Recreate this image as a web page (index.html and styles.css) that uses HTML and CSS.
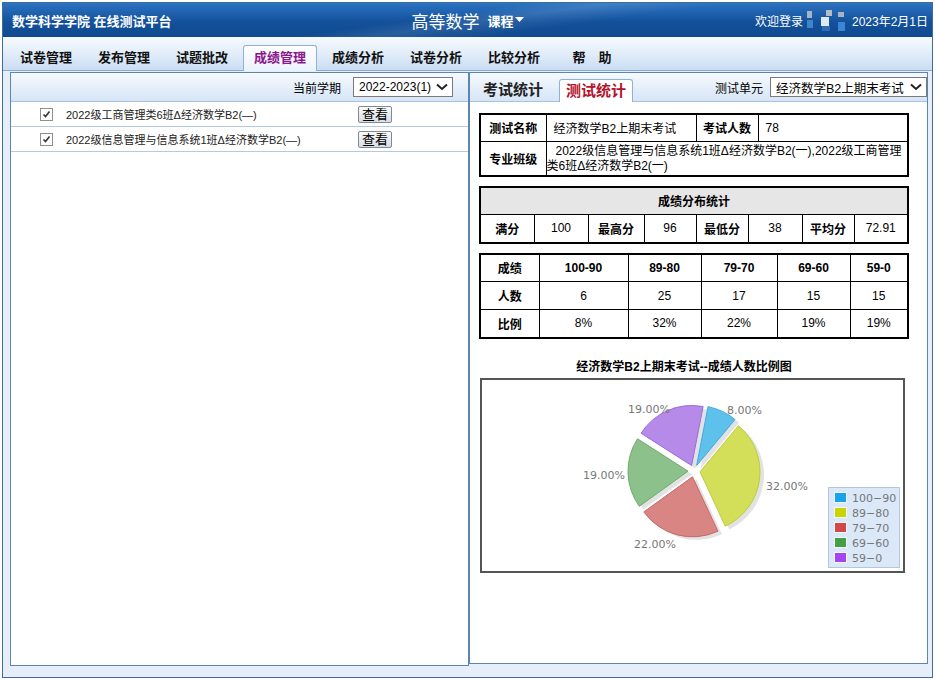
FILE: index.html
```html
<!DOCTYPE html>
<html lang="zh-CN">
<head>
  <meta charset="UTF-8">
  <title>数学科学学院 在线测试平台 - 成绩管理</title>
  <link rel="stylesheet" href="styles.css">
</head>
<body>
  <div class="app">
    <div class="topbar">
      <div class="brand">数学科学学院 在线测试平台</div>
      <div class="course">
        <span class="course-name">高等数学</span>
        <span class="course-menu">课程<svg width="9" height="6" viewBox="0 0 9 6"><polygon points="0,0 9,0 4.5,5" fill="#fff"/></svg></span>
      </div>
      <div class="user">
        <span>欢迎登录</span>
        <svg class="blur" width="40" height="24" viewBox="0 0 40 24">
          <rect x="1" y="3" width="5" height="7" fill="#a9b4c2"/>
          <rect x="1" y="12" width="6" height="8" fill="#3f83c9"/>
          <rect x="15" y="9" width="8" height="9" fill="#dfe9f6"/>
          <rect x="20" y="2" width="6" height="6" fill="#b4bcc6"/>
          <rect x="16" y="18" width="8" height="5" fill="#2c6cb6"/>
          <rect x="32" y="4" width="6" height="5" fill="#a8b3bf"/>
          <rect x="32" y="14" width="7" height="9" fill="#3a86d2"/>
        </svg>
        <span class="date">2023年2月1日</span>
      </div>
    </div>

    <div class="nav">
      <div class="tab">试卷管理</div>
      <div class="tab">发布管理</div>
      <div class="tab">试题批改</div>
      <div class="tab active">成绩管理</div>
      <div class="tab">成绩分析</div>
      <div class="tab">试卷分析</div>
      <div class="tab">比较分析</div>
      <div class="tab">帮　助</div>
    </div>

    <div class="main">
      <div class="panel left">
        <div class="phead">
          <span>当前学期</span>
          <div class="select term">
            <span>2022-2023(1)</span>
            <svg width="12" height="8" viewBox="0 0 12 8"><path d="M1 1.5 L6 6 L11 1.5" fill="none" stroke="#222" stroke-width="2"/></svg>
          </div>
        </div>
        <div class="row">
          <span class="chk"><svg width="11" height="11" viewBox="0 0 11 11"><path d="M2.5 5.5 L4.5 7.5 L8.5 2.5" fill="none" stroke="#333" stroke-width="1.6"/></svg></span>
          <span class="name">2022级工商管理类6班Δ经济数学B2(—)</span>
          <button class="btn">查看</button>
        </div>
        <div class="row">
          <span class="chk"><svg width="11" height="11" viewBox="0 0 11 11"><path d="M2.5 5.5 L4.5 7.5 L8.5 2.5" fill="none" stroke="#333" stroke-width="1.6"/></svg></span>
          <span class="name">2022级信息管理与信息系统1班Δ经济数学B2(—)</span>
          <button class="btn">查看</button>
        </div>
      </div>

      <div class="panel right">
        <div class="rhead">
          <div class="stab">考试统计</div>
          <div class="stab active">测试统计</div>
          <div class="unit">
            <span>测试单元</span>
            <div class="select exam">
              <span>经济数学B2上期末考试</span>
              <svg width="12" height="8" viewBox="0 0 12 8"><path d="M1 1.5 L6 6 L11 1.5" fill="none" stroke="#222" stroke-width="2"/></svg>
            </div>
          </div>
        </div>

        <div class="rbody">
          <table class="grid info">
            <tr class="r1">
              <th style="width:66px">测试名称</th>
              <td class="txt" style="width:150px">经济数学B2上期末考试</td>
              <th style="width:62px">考试人数</th>
              <td class="txt">78</td>
            </tr>
            <tr class="r2">
              <th>专业班级</th>
              <td class="classes" colspan="3">2022级信息管理与信息系统1班Δ经济数学B2(一),2022级工商管理类6班Δ经济数学B2(一)</td>
            </tr>
          </table>

          <table class="grid stats">
            <tr><th class="cap" colspan="8">成绩分布统计</th></tr>
            <tr>
              <th style="width:54px">满分</th><td style="width:54px">100</td>
              <th style="width:56px">最高分</th><td style="width:52px">96</td>
              <th style="width:52px">最低分</th><td style="width:54px">38</td>
              <th style="width:52px">平均分</th><td>72.91</td>
            </tr>
          </table>

          <table class="grid dist">
            <tr>
              <th style="width:59px">成绩</th>
              <th style="width:89px">100-90</th>
              <th style="width:73px">89-80</th>
              <th style="width:76px">79-70</th>
              <th style="width:73px">69-60</th>
              <th>59-0</th>
            </tr>
            <tr><th>人数</th><td>6</td><td>25</td><td>17</td><td>15</td><td>15</td></tr>
            <tr><th>比例</th><td>8%</td><td>32%</td><td>22%</td><td>19%</td><td>19%</td></tr>
          </table>

          <div class="chart-title">经济数学B2上期末考试--成绩人数比例图</div>
          <div class="chart">
            <svg width="421" height="191" viewBox="0 0 421 191">
              <!-- shadows -->
              <g fill="#e2e2e2" transform="translate(4,3)">
                <path d="M214.6 85.6 L226.0 26.7 A60 60 0 0 1 253.0 39.5 Z"/>
                <path d="M218.0 91.8 L256.4 45.7 A60 60 0 0 1 243.3 146.2 Z"/>
                <path d="M210.5 96.8 L235.9 151.2 A60 60 0 0 1 161.8 131.9 Z"/>
                <path d="M206.0 91.2 L157.3 126.3 A60 60 0 0 1 155.5 58.8 Z"/>
                <path d="M209.6 85.5 L159.1 53.2 A60 60 0 0 1 221.1 26.6 Z"/>
              </g>
              <path d="M214.6 85.6 L226.0 26.7 A60 60 0 0 1 253.0 39.5 Z" fill="#5dc1ec" stroke="#3ea9df"/>
              <path d="M218.0 91.8 L256.4 45.7 A60 60 0 0 1 243.3 146.2 Z" fill="#d3df58" stroke="#bfca3c"/>
              <path d="M210.5 96.8 L235.9 151.2 A60 60 0 0 1 161.8 131.9 Z" fill="#d88584" stroke="#c46968"/>
              <path d="M206.0 91.2 L157.3 126.3 A60 60 0 0 1 155.5 58.8 Z" fill="#8cc18b" stroke="#6eab6c"/>
              <path d="M209.6 85.5 L159.1 53.2 A60 60 0 0 1 221.1 26.6 Z" fill="#b68ae9" stroke="#9b6cd8"/>

              <g class="pct">
                <text x="245" y="34">8.00%</text>
                <text x="284" y="110">32.00%</text>
                <text x="152" y="168">22.00%</text>
                <text x="101" y="99">19.00%</text>
                <text x="146" y="33">19.00%</text>
              </g>

              <rect x="346.5" y="107.5" width="71" height="80" fill="#dae8f8" stroke="#b3c7dc"/>
              <g stroke="#f4f8fc">
                <rect x="352.5" y="112.5" width="12" height="10" fill="#19a3ea"/>
                <rect x="352.5" y="127.5" width="12" height="10" fill="#c9d500"/>
                <rect x="352.5" y="142.5" width="12" height="10" fill="#d24848"/>
                <rect x="352.5" y="157.5" width="12" height="10" fill="#45a045"/>
                <rect x="352.5" y="172.5" width="12" height="10" fill="#a545f0"/>
              </g>
              <g class="legend">
                <text x="370" y="122">100−90</text>
                <text x="370" y="137">89−80</text>
                <text x="370" y="152">79−70</text>
                <text x="370" y="167">69−60</text>
                <text x="370" y="182">59−0</text>
              </g>
            </svg>
          </div>
        </div>
      </div>
    </div>
  </div>
</body>
</html>
```

FILE: styles.css
```css
* {
  box-sizing: border-box;
}
body {
  margin: 0;
  background: #fff;
  font-family: "Liberation Sans", "Noto Sans CJK SC", sans-serif;
  font-size: 12px;
  color: #000;
}
.app {
  margin: 2px 2px 0;
  height: 676px;
  border: 1px solid #3d6c9e;
  background: #e6eff9;
  display: flex;
  flex-direction: column;
}

/* top bar */
.topbar {
  height: 34px;
  display: grid;
  grid-template-columns: 1fr auto 1fr;
  align-items: center;
  color: #fff;
  background:
    linear-gradient(172deg, rgba(255,255,255,0) 45%, rgba(255,255,255,0.10) 52%, rgba(255,255,255,0) 62%),
    linear-gradient(#2c73c2, #14519b 55%, #0f4a8f);
}
.brand {
  padding-left: 9px;
  font-weight: bold;
  font-size: 13px;
}
.course {
  display: flex;
  align-items: center;
  gap: 8px;
}
.course-name {
  font-size: 17px;
}
.course-menu {
  font-size: 13px;
  font-weight: bold;
  display: flex;
  align-items: center;
  gap: 1px;
}
.user {
  justify-self: end;
  padding-right: 4px;
  display: flex;
  align-items: center;
  font-size: 12px;
}
.blur {
  margin: 0 6px 0 3px;
}

/* nav tabs */
.nav {
  height: 34px;
  display: flex;
  align-items: flex-end;
  padding-left: 4px;
  background: linear-gradient(#f7fafe, #e2edf9 50%, #c9ddf3);
  border-bottom: 1px solid #88acd2;
}
.tab {
  width: 74px;
  margin: 0 2px;
  height: 25px;
  line-height: 25px;
  text-align: center;
  font-weight: bold;
  font-size: 13px;
  color: #111;
}
.tab.active {
  height: 26px;
  margin-bottom: -1px;
  line-height: 24px;
  color: #8c168c;
  background: linear-gradient(#ffffff, #eaf2fb);
  border: 1px solid #8fb1d3;
  border-bottom: none;
  border-radius: 3px 3px 0 0;
}

/* panels */
.main {
  flex: 1;
  display: flex;
  align-items: flex-start;
  padding: 1px 3px 0 7px;
}
.panel {
  background: #fff;
  border: 1px solid #5c86b0;
}
.left {
  width: 459px;
  height: 594px;
}
.right {
  width: 459px;
  height: 592px;
}
.phead, .rhead {
  height: 29px;
  border-bottom: 1px solid #a6c2df;
  background: linear-gradient(#f6f9fe, #d6e5f6);
}
.phead {
  display: flex;
  align-items: center;
  justify-content: flex-end;
  gap: 12px;
  padding-right: 15px;
}
.select {
  height: 20px;
  border: 1px solid #7a7a7a;
  background: #fff;
  display: flex;
  align-items: center;
  justify-content: space-between;
  padding: 0 4px 0 5px;
  font-size: 12px;
}
.term {
  width: 100px;
}
.exam {
  width: 157px;
  font-size: 12.5px;
}

.row {
  height: 25px;
  border-bottom: 1px solid #b2cae2;
  display: flex;
  align-items: center;
  padding-left: 29px;
}
.chk {
  width: 13px;
  height: 13px;
  margin-right: 13px;
  border: 1px solid #8e8f8f;
  background: #fff;
  display: flex;
}
.name {
  width: 292px;
  font-size: 11px;
  color: #222;
}
.btn {
  height: 17px;
  padding: 0 3px;
  font-family: inherit;
  font-size: 13px;
  line-height: 15px;
  border: 1px solid #7c8a99;
  border-radius: 2px;
  background: linear-gradient(#fbfbfb, #d9dde2);
  color: #000;
}

/* right panel */
.rhead {
  display: flex;
  align-items: flex-end;
  padding-left: 6px;
}
.stab {
  width: 74px;
  height: 22px;
  line-height: 22px;
  text-align: center;
  font-size: 15px;
  font-weight: bold;
  color: #222;
}
.stab.active {
  margin-left: 9px;
  margin-bottom: -1px;
  height: 23px;
  line-height: 21px;
  color: #b3132d;
  background: #fff;
  border: 1px solid #8fb1d3;
  border-bottom: none;
  border-radius: 3px 3px 0 0;
}
.unit {
  margin-left: auto;
  align-self: center;
  display: flex;
  align-items: center;
  gap: 7px;
}

.rbody {
  padding: 11px 0 0 9px;
}
.grid {
  width: 430px;
  border-collapse: collapse;
  border: 2px solid #000;
  font-size: 12px;
}
.grid th, .grid td {
  border: 1px solid #000;
  padding: 0;
  text-align: center;
}
.grid th {
  font-weight: bold;
}
.info .r1 {
  height: 27px;
}
.info .r2 {
  height: 34px;
}
.info td.txt {
  text-align: left;
  padding-left: 7px;
}
.info td.classes {
  text-align: left;
  text-indent: 9px;
  line-height: 15px;
  padding: 2px 1px 1px 0;
}
.stats {
  margin-top: 9px;
}
.stats tr, .dist tr {
  height: 28px;
}
.stats .cap {
  background: #e6e6e6;
}
.dist {
  margin-top: 9px;
}

.chart-title {
  width: 410px;
  margin-top: 20px;
  line-height: 16px;
  text-align: center;
  font-weight: bold;
  font-size: 12px;
}
.chart {
  width: 425px;
  height: 195px;
  margin: 3px 0 0 1px;
  border: 2px solid #555;
}
.chart svg {
  display: block;
}
.pct text, .legend text {
  font-family: "DejaVu Sans", sans-serif;
  font-size: 11px;
  fill: #777;
}
```
